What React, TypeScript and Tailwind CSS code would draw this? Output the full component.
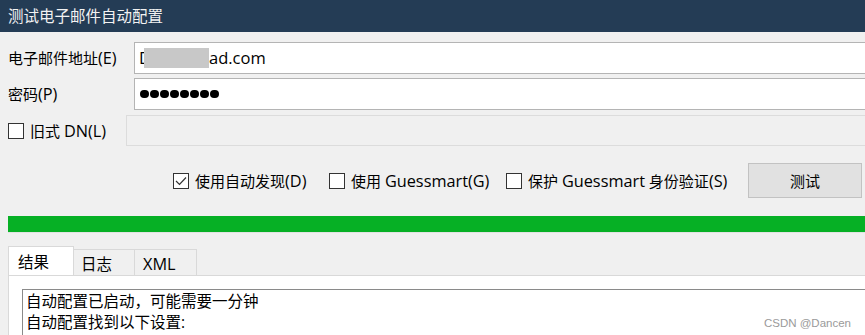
import React from 'react';

// latin runs render a bit larger than the CJK glyphs, like YaHei UI
const L: React.FC<{ children: React.ReactNode }> = ({ children }) => (
  <span className="text-[16.3px]">{children}</span>
);

const Box: React.FC<{ checked?: boolean }> = ({ checked }) => (
  <div className="w-[16px] h-[16px] border border-[#333333] bg-white flex items-center justify-center shrink-0">
    {checked && (
      <svg width="12" height="10" viewBox="0 0 12 10">
        <polyline points="1,5 4.5,8.5 11,1.5" fill="none" stroke="#333" strokeWidth="1.2" />
      </svg>
    )}
  </div>
);

const CheckItem: React.FC<{ children: React.ReactNode; checked?: boolean; w: string }> = ({ children, checked, w }) => (
  <div className={`flex items-center gap-[6px] ${w}`}>
    <Box checked={checked} />
    <span className="whitespace-nowrap">{children}</span>
  </div>
);

const App: React.FC = () => {
  return (
    <div className="relative w-[865px] h-[335px] overflow-hidden bg-[#f0f0f0] text-[15px] leading-[20px] text-black font-['Open_Sans','Noto_Sans_CJK_SC',sans-serif]">
      <div className="h-[32px] bg-[#243c55] text-[#f2f2f2] text-[15.5px] pl-[8px] flex items-center">
        测试电子邮件自动配置
      </div>

      <div className="pl-[8px] pt-[10px] flex flex-col">
        <div className="flex items-center h-[32px]">
          <label className="w-[126px] shrink-0">电子邮件地址<L>(E)</L></label>
          <div className="flex-1 h-full bg-white border border-r-0 border-[#b4b4b4] flex items-center pl-[4px] text-[16.5px]">
            <span>D</span>
            <span className="inline-block w-[65px] h-[20px] bg-[#c8c8c8] -ml-[7px]" />
            <span>ad.com</span>
          </div>
        </div>
        <div className="flex items-center h-[32px] mt-[4px]">
          <label className="w-[126px] shrink-0">密码<L>(P)</L></label>
          <div className="flex-1 h-full bg-white border border-r-0 border-[#b4b4b4] flex items-center gap-[1.5px] pl-[5px]">
            {Array.from({ length: 8 }).map((_, i) => (
              <span key={i} className="w-[8.5px] h-[8.5px] rounded-full bg-black" />
            ))}
          </div>
        </div>
        <div className="flex items-center h-[31px] mt-[5px]">
          <div className="w-[118px] shrink-0 flex items-center gap-[6px]">
            <Box />
            <span>旧式 <L>DN(L)</L></span>
          </div>
          <div className="flex-1 h-full bg-[#f0f0f0] border border-r-0 border-[#dcdcdc]" />
        </div>
      </div>

      <div className="mt-[17px] h-[35px] flex items-center pl-[173px]">
        <CheckItem checked w="w-[156px]">使用自动发现<L>(D)</L></CheckItem>
        <CheckItem w="w-[177px]">使用 <L>Guessmart(G)</L></CheckItem>
        <CheckItem w="w-[242px]">保护 <L>Guessmart</L> 身份验证<L>(S)</L></CheckItem>
        <button className="w-[114px] h-full bg-[#e1e1e1] border border-[#c2c2c2] text-[15px]">测试</button>
      </div>

      <div className="mt-[18px] ml-[8px] h-[17px] bg-[#06b025] border-b border-[#e2e2e2]" />

      <div className="mt-[13px] ml-[8px] flex items-end">
        <div className="w-[66px] h-[29px] bg-white border border-b-0 border-[#d9d9d9] pl-[9px] pt-[5px] text-[15.5px]">结果</div>
        <div className="w-[61px] h-[26px] bg-[#f0f0f0] border border-l-0 border-b-0 border-[#d9d9d9] pl-[7px] pt-[4px] text-[15.5px]">日志</div>
        <div className="w-[62px] h-[26px] bg-[#f0f0f0] border border-l-0 border-b-0 border-[#d9d9d9] pl-[8px] pt-[4px] text-[16.3px]">XML</div>
      </div>
      <div className="ml-[8px] h-[80px] bg-white border-t border-l border-[#d9d9d9] pl-[13px] pt-[13px]">
        <div className="h-full border border-r-0 border-[#8a8a8a] pl-[3px] pt-[1px] text-[15.5px] leading-[21px]">
          <div>自动配置已启动，可能需要一分钟</div>
          <div>自动配置找到以下设置:</div>
        </div>
      </div>

      <div className="absolute right-[14px] top-[313px] text-[11.5px] text-[#9a9a9a] font-['Liberation_Sans',sans-serif]">
        CSDN @Dancen
      </div>
    </div>
  );
};

export default App;
